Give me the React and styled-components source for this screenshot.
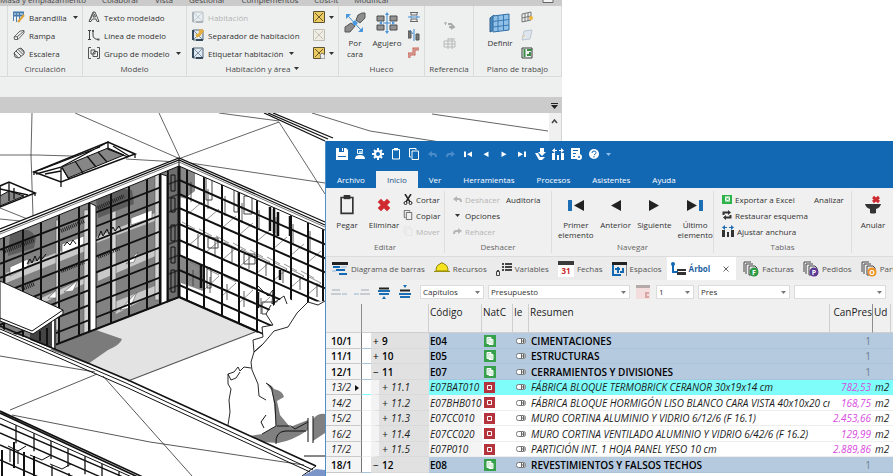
import React from 'react'
import styled, { createGlobalStyle } from 'styled-components'

const GlobalStyle = createGlobalStyle`
    *{
        box-sizing:border-box;
    }
    body{
        margin:0;
        background:#fff;
        font-family:"Open Sans", "Noto Sans", sans-serif;
        font-size:8px;
        color:#333;
    }
    button, select, input{
        font:inherit;
        color:inherit;
        margin:0;
    }
    svg{
        display:block;
        flex:none;
    }
`

/* ---------- icons ---------- */

const Svg = ({ w = 12, h = 12, box, children }) => (
  <svg width={w} height={h} viewBox={box || `0 0 ${w} ${h}`} fill="none" stroke="#444" strokeWidth="1" aria-hidden="true">
    {children}
  </svg>
)

const Caret = ({ color = '#333' }) => (
  <Svg w={5} h={3}><path d="M0 0h5L2.500 3z" fill={color} stroke="none" /></Svg>
)

const RailingIcon = () => (
  <Svg>
    <path d="M0 1.500h11M0 4.500h11" stroke="#3f79b0" strokeWidth="2" />
    <path d="M.5 1v9M3.500 1v10M6.500 1v10M10.500 1v4" stroke="#4c7fae" />
    <path d="M5 11l6-7" stroke="#e0a23c" strokeWidth="2" />
  </Svg>
)
const RampIcon = () => (
  <Svg><path d="M1 8l6-6 4-.5v2.500L5 10.500H1.500zM1 8l3.500-.5L11 2M4.500 7.500V10" stroke="#666" /></Svg>
)
const StairIcon = () => (
  <Svg><path d="M1 6l4-4 3-1 3 3v3l-5 4-4-1zM3 4l5 5M5 2.500l5 5M1 6l4 4.500M7 1.500l4 4" stroke="#555" /></Svg>
)
const ModelTextIcon = () => (
  <Svg><path d="M1 10.500L5 1h2l4 9.500H9L8 8H4.500l-1.500 2.500zM5 6h2.500L6.500 3zM2 9l4-8" stroke="#555" /></Svg>
)
const ModelLineIcon = () => (
  <Svg><path d="M1.500 1v10M0 1.500h3M0 10.500h3M5 2v4q0 4 5 4.500" /><path d="M4 1h2v2H4zM9.500 9.500h2v2h-2z" fill="#555" stroke="none" /></Svg>
)
const ModelGroupIcon = () => (
  <Svg><path d="M3 .5H.5v11H3M9 .5h2.500v11H9M3 3h4v4H3zM5 6.500l1-2h3.500v5H5z" stroke="#555" /></Svg>
)
const RoomIcon = ({ accent, faded }) => (
  <Svg>
    <g opacity={faded ? 0.35 : 1}>
      <path d="M1 1h10v10H1z" fill="#dfe8ef" stroke="#52677a" />
      <path d="M1 1l10 10M11 1L1 11" stroke="#7c92a6" />
      <path d="M1 1v10M4 11h7" strokeWidth="2" stroke="#34495c" />
    </g>
    {accent && <path d="M4 7l3-1 4-5M7 2h4" stroke={accent} strokeWidth="3" />}
  </Svg>
)
const AreaIcon = ({ faded, tag }) => (
  <Svg>
    <g opacity={faded ? 0.3 : 1}>
      <path d="M.5.500h11v11H.5z" fill={faded ? '#eee6cc' : '#eccb62'} stroke="#5b5130" />
      <path d="M2 2l8 8M10 2l-8 8" stroke="#6b5c26" />
    </g>
    {tag && <path d="M7 8l2-2 3 2v4H8z" fill="#eee" stroke="#777" />}
  </Svg>
)
const FaceOpeningIcon = () => (
  <Svg w={22} h={22}>
    <path d="M14 3l4-2h3v5l-5 5-4-3zM1 15l6-4 4 3-5 6H1z" fill="#8d8d8d" stroke="#555" />
    <path d="M4 4l13 14" stroke="#3d89cf" />
    <path d="M2 2h5L2 7zM19 20h-5l5-5zM8 11l3-3 3 3-3 3z" fill="#4a97de" stroke="none" />
  </Svg>
)
const ShaftIcon = () => (
  <Svg w={22} h={22}>
    <path d="M1 4h7v5H1zM14 4h7v5h-7zM1 13h7v5H1zM14 13h7v5h-7z" fill="#939393" stroke="#4d4d4d" />
    <path d="M11 1v20M7 11h8" stroke="#3d89cf" />
    <path d="M9 3l2-3 2 3zM9 19l2 3 2-3zM6 9v4l-3-2zM16 9v4l3-2z" fill="#4a97de" stroke="none" />
  </Svg>
)
const WallOpeningIcon = () => (
  <Svg><path d="M2 1.500h8M2 10.500h8M3 1v3h6V1M3 11V8h6v3" stroke="#666" /><path d="M0 6h12M3 4.500v3M9 4.500v3" stroke="#4a90cf" /></Svg>
)
const VerticalOpeningIcon = () => (
  <Svg><path d="M0 2h3v7H0zM8 5h3v6H8z" fill="#777" stroke="#555" /><path d="M6 0v12M2 1l3 4" stroke="#3d89cf" /></Svg>
)
const DormerIcon = () => (
  <Svg><path d="M1 11V7h5V2h5" stroke="#c9675b" strokeWidth="3" /><path d="M1 11V7h5V2h5" stroke="#dcb1ab" /></Svg>
)
const RefLineIcon = () => (
  <Svg w={14}><path d="M1 4h3M2.500 3v3" stroke="#b0b0b0" /><path d="M6 8h5M8 5l3 3-3 2M5 5h4" stroke="#aaa" strokeWidth="2" /></Svg>
)
const RefGridIcon = () => (
  <Svg w={14}><path d="M1 4h11v6H1zM5 1v11M9 1v11M1 7h11M12 2H5" stroke="#b8b8b8" /></Svg>
)
const WorkPlaneIcon = () => (
  <Svg w={22} h={22}>
    <path d="M1 6L5 3v15l-4 2z" fill="#4a87ba" stroke="#2f628e" />
    <path d="M4 4l16-2v16L4 20z" fill="#8fc1e8" stroke="#2f6ea8" />
    <path d="M9 3.500v16M14.500 3v15.500M4 9.500l16-2M4 15l16-2" stroke="#3a7ab3" />
  </Svg>
)
const ShowPlaneIcon = () => (
  <Svg><path d="M1 3l9-2v8l-9 2zM4 2.500v8M7 2v8M1 7l9-2" stroke="#777" /><circle cx="10" cy="7" r="2" fill="#f0b73c" stroke="none" /></Svg>
)
const RefPlaneIcon = () => (
  <Svg><path d="M3 2l8-1-2 9-8 1z" fill="#dfe5ec" stroke="#bcc6d2" /><path d="M1 9l3-3" stroke="#e6c98a" /></Svg>
)
const ViewerIcon = () => (
  <Svg><path d="M1 1h10v10H1z" stroke="#3b3b3b" /><path d="M3.500 2v8M6 3h5M6 8h3V5" stroke="#3c8b48" strokeWidth="2" /></Svg>
)

const SaveIcon = () => (
  <Svg><path d="M0 0h10l2 2v10H0z" fill="#fff" stroke="none" /><path d="M3 0h5v4H3zM2 8h8v1H2z" fill="#1368b4" stroke="none" /><path d="M6 0h1v3H6z" fill="#fff" stroke="none" /></Svg>
)
const UserDiskIcon = () => (
  <Svg><path d="M3.500 1.500h5v4h-5z" stroke="#fff" /><path d="M1 11q0-4 5-4t5 4z" fill="#fff" stroke="none" /><path d="M5 3h4v2H5z" fill="#9fd0f5" stroke="none" /></Svg>
)
const GearIcon = () => (
  <Svg><circle cx="6" cy="6" r="3" stroke="#fff" strokeWidth="2" /><path d="M6 0v2.500M6 9.500V12M0 6h2.500M9.500 6H12M2 2l2 2M8 8l2 2M2 10l2-2M8 4l2-2" stroke="#fff" strokeWidth="2" /></Svg>
)
const PasteIcon = ({ size = 12, color = '#fff' }) => (
  <Svg w={size} h={size} box="0 0 12 12"><path d="M2.500 1.500h7v9.500h-7z" stroke={color} /><path d="M4 0h4v2.500H4z" fill={color} stroke="none" /></Svg>
)
const CopyIcon = ({ color = '#fff', size = 12 }) => (
  <Svg w={size} h={size} box="0 0 12 12"><path d="M4 3h6.500v8.500H4zM3 9H1.500V.5H8V2" stroke={color} /></Svg>
)
const UndoIcon = ({ flip, color }) => (
  <Svg w={9} h={8}>
    <g transform={flip ? 'matrix(-1 0 0 1 9 0)' : undefined}>
      <path d="M0 4l4-3v6z" fill={color} stroke="none" /><path d="M3 4h3q2 0 2 3" stroke={color} strokeWidth="2" />
    </g>
  </Svg>
)
const StepIcon = ({ dir, bar, size = 8, color = '#fff', barColor = '#fff' }) => (
  <Svg w={bar ? size + 6 : size} h={size} box={bar ? '0 0 18 12' : '0 0 12 12'}>
    <g transform={dir === 'next' ? `matrix(-1 0 0 1 ${bar ? 18 : 12} 0)` : undefined} stroke="none">
      {bar && <path d="M1 1h4v11H1z" fill={barColor} />}
      <path d={bar ? 'M17 1v11L7 6.500z' : 'M11 1v11L1 6.500z'} fill={color} />
    </g>
  </Svg>
)
const LoadIcon = () => (
  <Svg><path d="M6 0h4v4h2l-4 4-4-4h2zM1 5h3l2 4h5l-3 3H5z" fill="#fff" stroke="none" /></Svg>
)
const WidthIcon = ({ bars = '#fff', arrows = '#fff' }) => (
  <Svg><path d="M0 5h3v7H0zM5 7h2v5H5zM9 5h3v7H9z" fill={bars} stroke="none" /><path d="M0 2.500L3 0v5zM12 2.500L9 0v5z" fill={arrows} stroke="none" /><path d="M3 2.500h2M7 2.500h2" stroke={arrows} /></Svg>
)
const DocGearIcon = () => (
  <Svg><path d="M1 0h9v6H8v5H1z" fill="#fff" stroke="none" /><path d="M3 2.500h5M3 5.500h3M3 8.500h2" stroke="#1368b4" /><circle cx="9" cy="9" r="2" stroke="#fff" strokeWidth="2" /></Svg>
)
const HelpIcon = () => (
  <Svg><circle cx="6" cy="6" r="5" fill="#fff" stroke="none" /><path d="M4 5q0-2 2-2t2 1.500T6 7M6 8v1.500" stroke="#1368b4" /></Svg>
)
const CrossIcon = ({ size = 12 }) => (
  <Svg w={size} h={size} box="0 0 12 12"><path d="M2 2l8 8M10 2l-8 8" stroke="#cf2a30" strokeWidth="4" /></Svg>
)
const CutIcon = () => (
  <Svg w={10} h={11}><path d="M2 0l5 8M8 0L3 8" stroke="#222" strokeWidth="1.500" /><circle cx="2.500" cy="9" r="1.500" stroke="#222" /><circle cx="7.500" cy="9" r="1.500" stroke="#222" /></Svg>
)
const ExcelIcon = () => (
  <Svg w={10} h={10}><path d="M0 1h10v9H0z" fill="#2eb34a" stroke="none" /><path d="M3 2.500h5v5H3z" fill="#fff" stroke="none" /><path d="M4 3.500l3 3M7 3.500l-3 3" stroke="#2eb34a" /></Svg>
)
const RefreshIcon = () => (
  <Svg w={10} h={10}><path d="M1.500 5V2.500H6M8.500 5v2.500H4" stroke="#333" strokeWidth="2" /><path d="M6 0l3 2.500L6 5zM4 5L1 7.500 4 10z" fill="#333" stroke="none" /></Svg>
)
const FilterOffIcon = () => (
  <Svg w={18} h={20}><path d="M9 2l6 5M15 2L9 7" stroke="#cf2a30" strokeWidth="3" /><path d="M1 9h16q-1 4-5 5v4q-3 1-6 0v-4Q2 13 1 9z" fill="#333" stroke="none" /></Svg>
)
const PanelIcon = () => (
  <Svg w={12} h={6}><path d="M1 0v3.500h10V0" stroke="#666" fill="#f4f4f4" /></Svg>
)

const GanttIcon = () => (
  <Svg w={16} h={14}><path d="M0 1.500h16" stroke="#222" strokeWidth="3" /><path d="M1 5h7M4 8h9M7 12h8" stroke="#1368b4" strokeWidth="2" /><path d="M0 9h4M9 5h6" stroke="#8fb5d8" strokeWidth="1" /></Svg>
)
const HelmetIcon = () => (
  <Svg w={16} h={14}><path d="M2 9q0-6 4-7l1-1h2l1 1q4 1 4 7z" fill="#f6e51e" stroke="#8d8010" /><path d="M0 9.500h16" stroke="#9b8e0d" /></Svg>
)
const VariablesIcon = () => (
  <Svg w={16} h={14}><path d="M6 2h2M6 5h2M6 8h2M9 2h7M9 5h7M9 8h7" stroke="#444" strokeWidth="2" /><path d="M.5 9.500h3v4h-3zM1 8.500h2" stroke="#444" /></Svg>
)
const CalendarIcon = () => (
  <Svg w={16} h={16}>
    <path d="M0 0h16v4H0z" fill="#3a3a3a" stroke="none" /><path d="M0 4h16v12H0z" fill="#fff" stroke="none" />
    <text x="8" y="13" textAnchor="middle" fontSize="8" fontWeight="700" fill="#c8262c" stroke="none">31</text>
  </Svg>
)
const SpacesIcon = () => (
  <Svg w={15} h={14}><path d="M0 1.500h15" stroke="#222" strokeWidth="3" /><path d="M14.500 3v11" stroke="#888" /><path d="M1 3v10h8" stroke="#1368b4" strokeWidth="2" /><path d="M3 7h5M6 5v6M8 10h3V6" stroke="#1368b4" strokeWidth="2" /></Svg>
)
const TreeIcon = () => (
  <Svg w={15} h={14}><path d="M2 2v8h5" stroke="#1368b4" strokeWidth="2" /><circle cx="2" cy="2" r="2" fill="#1368b4" stroke="none" /><path d="M6 7h9v2H6zM6 10h9v3H6z" fill="#333" stroke="none" /></Svg>
)
const DocsIcon = ({ letter, color }) => (
  <Svg w={16} h={16}>
    <path d="M1 11V1h7M3 13V3h7M6 5h6l2 2v7H6z" fill="none" stroke="#444" />
    <circle cx="11" cy="11" r="4.500" fill={color} stroke="none" />
    <text x="11" y="14" textAnchor="middle" fontSize="7" fontWeight="700" fill="#fff" stroke="none">{letter}</text>
  </Svg>
)

const LevelIcon = ({ flip }) => (
  <Svg w={16} h={12}>
    <g opacity="0.4" transform={flip ? 'matrix(-1 0 0 1 16 0)' : undefined}>
      <path d="M1 5h8M0 9h10" stroke="#8d9aa6" strokeWidth="2" /><path d="M11 9h5" stroke="#7fa8c9" strokeWidth="2" />
    </g>
  </Svg>
)
const ExpandIcon = ({ up }) => (
  <Svg w={14} h={14}>
    <path d={up ? 'M2 5.500h10' : 'M2 3.500h10'} stroke="#222" strokeWidth="2" />
    <path d={up ? 'M1 9h12M2 12h10' : 'M1 6h12M2 9h10'} stroke="#1d6fb5" strokeWidth="2" />
    <path d={up ? 'M5 0h4L7 3z' : 'M5 14h4L7 11z'} fill="#1d6fb5" stroke="none" />
  </Svg>
)
const PinkIcon = () => (
  <Svg w={14} h={14}><path d="M0 0h14v14H0z" fill="#f3dedd" stroke="none" /><path d="M0 1.500h14" stroke="#b5aaaa" strokeWidth="3" /><path d="M13 8h-3v4h3" stroke="#d9a5a5" strokeWidth="2" /></Svg>
)
const NatIcon = ({ chapter }) => chapter ? (
  <Svg><path d="M0 0h12v12H0z" fill="#36a04b" stroke="none" /><path d="M3 2.500h4v6H3zM5 4.500h4v5H5z" fill="#b9e2c0" stroke="#fff" /></Svg>
) : (
  <Svg w={11} h={11}><path d="M0 0h11v11H0z" fill="#b4333c" stroke="none" /><path d="M3.500 3.500h4v4h-4z" stroke="#fff" /></Svg>
)
const TagIcon = () => (
  <Svg w={11} h={8}><rect x="1.500" y="1.500" width="9" height="5" rx="2" fill="#fff" stroke="#777" /><path d="M6.500 2v4M6 4h4M8.500 2v4" stroke="#666" /></Svg>
)

/* ---------- building model ---------- */

const leftColumns = [4, 23, 41, 59, 79, 89, 111, 129, 147, 160, 168]
const rightColumns = [187, 204, 222, 239, 257, 274, 291, 308, 323]
const floors = [180, 194, 208, 224, 240, 255, 270, 285, 297]
const bays = [0, 1, 2, 3, 4, 5, 6, 7]
const leftSlope = 0.4
const rightSlope = 0.44
const leftTop = x => 166 + (179 - x) * leftSlope
const leftBottom = x => 297 + (179 - x) * 0.387
const rightTop = x => 166 + (x - 179) * rightSlope
const rightBottom = x => 297 + (x - 179) * rightSlope

const BuildingView = () => (
  <svg viewBox="0 113 562 363" width="100%" height="100%" preserveAspectRatio="xMinYMin slice" fill="none" stroke="#111" role="img" aria-label="Modelo 3D del edificio">
    <defs>
      <clipPath id="leftWall"><path d="M0 239L179 166V298L55 346 0 330z" /></clipPath>
      <clipPath id="rightWall"><path d="M179 166L325 230V362L179 298z" /></clipPath>
      <clipPath id="lowWall"><path d="M0 413L145 478H0z" /></clipPath>
    </defs>

    <g stroke="#222" strokeWidth="0.7">
      <path d="M32 113L31 155 33 216M75 113L178 158M159 113L180 158M181 158L279 122M219 113L279 121M279 122L325 194M190 163L325 183M126 159L178 162M0 155H37L106 157" />
      <path d="M312 113L370 131 440 142M432 114L548 131M0 208L30 220M0 219L20 221" />
    </g>
    <path d="M264 113L325 141M268 113L328 139M273 113L333 138" strokeWidth="1.300" />

    {/* skylights */}
    <path d="M34 172L108 142 135 154 61 182z" fill="#fff" strokeWidth="1.600" />
    <path d="M62 167L108 148 124 155 68 178z" fill="#868686" />
    <path d="M36 174L61 167V187M61 167L108 142V149L128 157M75 161l8 12M87 156l9 11M98 152l9 10M62 168l7 11M40 170L100 147M135 154V158M34 171V175M45 174l16-3M113 146l16 10" strokeWidth="1.300" />
    <path d="M0 186L9 182 35 193 0 207z" fill="#fff" strokeWidth="1.600" />
    <path d="M0 196L9 191 24 196 0 206z" fill="#868686" />
    <path d="M0 189L28 195M9 182V201M35 193V196M14 188V199" strokeWidth="1.300" />

    {/* left wall */}
    <g clipPath="url(#leftWall)">
      <path d="M0 160H180V350H0z" fill="#828282" stroke="none" />
      <path d="M6 273L88 240V250L6 283zM96 237L160 211V219L96 243zM30 303L88 277V282L30 309zM98 273L160 247V254L98 281zM112 303L160 284V291L116 314z" fill="#c9c9c9" stroke="none" />
      <path d="M10 267L28 259V267L10 276zM62 244L84 236V244L62 253zM131 218L152 210V218L131 225zM48 298L62 285 56 298zM126 264l12-12-4 10zM64 292l14-12-5 11zM120 310L137 292 130 308z" fill="#fff" stroke="#555" strokeWidth="0.600" />
      <path d="M84 210h5v130h-5zM112 192h4v120h-4zM155 170h4v130h-4zM56 220h3v110h-3z" fill="#d5d5d5" stroke="#444" strokeWidth="0.500" />
      <path d="M10 234q20-10 26 4l-2 10-26 8zM96 200q8-14 36-10l2 14-36 14z" fill="#5c5c5c" stroke="none" />
      <path d="M3 252L34 240M61 231L84 221M98 208L124 196M61 271L84 262M98 257L120 248M22 289L34 284" stroke="#222" strokeWidth="4" strokeDasharray="1 1" />
      <path d="M27 264l3-5 2 4 3-7 2 5 4-6 1 4 4-5M64 246l3-4 3 3 3-5 3 4M98 238l3-7 2 5 4-7 2 5 4-7 2 4 4-5 2 4" strokeWidth="1" />
      {floors.map(y => <path key={y} d={`M179 ${y}L0 ${y + 179 * 0.39}`} strokeWidth="1.800" />)}
      {[302, 319].map(y => <path key={y} d={`M179 ${y}L0 ${y + 70}`} strokeWidth="1.800" />)}
      {leftColumns.map(x => <path key={x} d={`M${x} ${leftTop(x)}V${leftBottom(x) + 4}`} strokeWidth="2" />)}
      <path d="M168 165h11v135h-11z" fill="#5a5a5a" fillOpacity="0.5" />
      <path d="M171 175h4v16h-4zM171 198h4v14h-4zM171 225h4v16h-4zM171 247h4v16h-4zM171 270h4v22h-4z" />
    </g>
    <path d="M90 203l6 3V333l-6-2zM161 174l6 2V305l-6 1z" fill="#fff" />

    {/* right wall */}
    <g clipPath="url(#rightWall)">
      <path d="M179 160H325V360H179z" fill="#fff" stroke="none" />
      <path d="M179 166l8 3v30l-8-2zM187 170l8 3v18l-8 6zM181 256l22 10v25l-22-8z" fill="#888" stroke="none" />
      <g stroke="#777" strokeWidth="0.800">
        {bays.map(i => (
          <path key={i} d={`M${188 + i * 17} ${214 + i * 7}l14-12M${188 + i * 17} ${246 + i * 7}l14-12M${188 + i * 17} ${282 + i * 7}l14-13M${182 + i * 17} ${222 + i * 7}l13 7M${190 + i * 17} ${228 + i * 7}l12 6M${190 + i * 17} ${262 + i * 7}l12 6`} />
        ))}
      </g>
      <g stroke="#333" strokeWidth="0.800">
        {bays.map(i => (
          <path key={i} d={`M${191 + i * 17} ${182 + i * 7}v20M${198 + i * 17} ${234 + i * 7}v14M${193 + i * 17} ${270 + i * 7}v16`} />
        ))}
      </g>
      <path d="M206 178h6v22h-6zM234 190h4v22h-4zM244 196h8v18h-8zM208 238h10v10h-10zM244 254h11v10h-11zM207 268h4v20h-4zM262 302h16v12h-16z" stroke="#444" />
      <path d="M270 207v24M274 209v24M278 212v24M290 216v20M280 270v10M258 292v16M201 264v24" strokeWidth="2.500" />
      {floors.map(y => <path key={y} d={`M179 ${y}L325 ${y + 146 * rightSlope}`} strokeWidth="2" />)}
      {rightColumns.map(x => <path key={x} d={`M${x} ${rightTop(x)}V${rightBottom(x)}`} strokeWidth="2" />)}
    </g>
    <path d="M179 166V298" strokeWidth="3" />

    {/* parapet */}
    <path d="M0 229L179 158 325 222V230L179 166 0 239z" fill="#fff" stroke="none" />
    <path d="M0 229L179 158 325 222M0 232L179 160 325 225" strokeWidth="1.300" />
    <path d="M0 234L179 162 325 227" stroke="#777" />
    <path d="M0 239L179 166 325 230M179 158V168" />

    {/* courtyard */}
    <path d="M179 298L255 332 128 381 50 347z" fill="#e3e3e3" stroke="none" />
    <path d="M55 346L96 330 122 339Q120 345 108 350L88 364 50 350z" fill="#7b7b7b" stroke="none" />
    <path d="M55 345L179 297 258 332" strokeWidth="2" />
    <path d="M255 332L128 381" stroke="#555" strokeWidth="1.300" />

    {/* canopy */}
    <path d="M30 320h26v30l-26-10z" fill="#444" stroke="none" />
    <path d="M40 331V341M47 328V345" strokeWidth="2" />
    <path d="M53 316V348" stroke="#fff" strokeWidth="2" />
    <path d="M0 281L63 310V314L33 334 0 321z" fill="#fff" />
    <path d="M63 310L32 331 0 318" />

    {/* trees */}
    <path d="M272 307L266 314 273 325 262 328 263 336 254 340 254 350 262 345 252 360 250 368 240 367 228 375 231 390 228 425 325 470V301L297 303 284 296z" fill="#fff" stroke="none" />
    <path d="M258 286L268 296 273 290 272 304 284 296 287 304M271 305L266 314 273 325 262 327 263 337 253 340 254 352 262 345" strokeWidth="0.900" />
    <path d="M325 301L318 305 308 302 297 313 288 327 274 331 263 344 254 352 251 362 252 370 258 384 259 396 266 400" strokeWidth="0.900" />
    <path d="M251 368L244 367 240 371 238 367 234 372 228 374 231 380 236 378 240 372M228 374L228 384 231 389 229 400 230 412 228 425" strokeWidth="0.900" />
    <path d="M266 383Q272 385 274 389Q283 391 284 397L277 401 280 415 290 427 308 420V430Q292 441 278 443L262 442 250 436 262 434 276 426 274 404 272 391z" fill="#808080" stroke="none" />
    <path d="M266 383Q273 387 272 391L275 404 276 426 262 434M277 426h14l4 3 13-7" strokeWidth="0.900" />
    <path d="M313 419Q318 413 325 414V433L313 441z" fill="#808080" stroke="none" />
    <path d="M308 418V442M313 416V443M304 456H325M266 415l-5 7 3 6M276 444Q275 432 285 431H306" />

    {/* lower roof */}
    <path d="M0 328L316 465 312 476H145L0 411z" fill="#fff" stroke="none" />
    <path d="M0 326L128 380 316 466" strokeWidth="1.600" />
    <path d="M0 329L126 383 313 470M0 332L128 388 310 472" />
    <path d="M316 466L302 476" />
    <path d="M316 469L302 476H325V470z" fill="#7c95c9" stroke="none" />
    <path d="M0 356L95 372M10 410L97 374M103 376L192 476M12 415L150 442 304 465" strokeWidth="0.700" />

    {/* lower facade */}
    <g clipPath="url(#lowWall)">
      {[16, 34, 51, 68, 85, 102, 119].map(x => <path key={x} d={`M${x} ${x * 0.45 + 418}v18M${x + 18} ${x * 0.45 + 450}v34`} strokeWidth="1.300" />)}
      <path d="M0 424L130 480M0 433L112 482M0 445L90 484M0 460L50 482" strokeWidth="1.400" />
      <path d="M2 450v26M14 442v26M24 452v28M34 456v28" strokeWidth="2" />
      <path d="M10 450v12M18 450v14M8 446l10 5 8-5M30 455l12 5 9-5M50 464l12 5 9-5" />
    </g>
    <path d="M0 411L145 478M0 413L140 478" strokeWidth="1.600" />
    <path d="M0 418L134 478" />
  </svg>
)

/* ---------- background application ---------- */

const RibbonGroup = ({ title, width, caret, start, children }) => (
  <Group $width={width}>
    <GroupBody $start={start}>{children}</GroupBody>
    <GroupTitle>{title}{caret && <Caret />}</GroupTitle>
  </Group>
)

const Tool = ({ icon, label, caret, disabled }) => (
  <ToolButton type="button" disabled={disabled} aria-label={label ? undefined : 'Herramienta'}>
    {icon}
    {label && <span>{label}</span>}
    {caret && <Caret />}
  </ToolButton>
)

const ModelWindow = () => (
  <ModelFrame>
    <ClippedTabs>
      <span>Masa y emplazamiento</span><span>Colaborar</span><span>Vista</span><span>Gestionar</span><span>Complementos</span><span>Cost-it</span><span>Modificar</span>
      <PanelIcon />
    </ClippedTabs>
    <ModelRibbon>
      <Edge />
      <RibbonGroup title="Circulación" width={75}>
        <ToolColumn>
          <Tool icon={<RailingIcon />} label="Barandilla" caret />
          <Tool icon={<RampIcon />} label="Rampa" />
          <Tool icon={<StairIcon />} label="Escalera" />
        </ToolColumn>
      </RibbonGroup>
      <RibbonGroup title="Modelo" width={104}>
        <ToolColumn>
          <Tool icon={<ModelTextIcon />} label="Texto modelado" />
          <Tool icon={<ModelLineIcon />} label="Línea de modelo" />
          <Tool icon={<ModelGroupIcon />} label="Grupo de modelo" caret />
        </ToolColumn>
      </RibbonGroup>
      <RibbonGroup title="Habitación y área" width={152} caret>
        <ToolColumn>
          <Tool icon={<RoomIcon faded />} label="Habitación" disabled />
          <Tool icon={<RoomIcon accent="#e3ae3f" />} label="Separador de habitación" />
          <Tool icon={<RoomIcon />} label="Etiquetar habitación" caret />
        </ToolColumn>
        <ToolColumn>
          <Tool icon={<AreaIcon />} caret />
          <Tool icon={<AreaIcon faded />} disabled />
          <Tool icon={<AreaIcon tag />} caret />
        </ToolColumn>
      </RibbonGroup>
      <RibbonGroup title="Hueco" width={86}>
        <BigTool type="button"><FaceOpeningIcon /><span>Por<br />cara</span></BigTool>
        <BigTool type="button"><ShaftIcon /><span>Agujero</span></BigTool>
        <ToolColumn>
          <Tool icon={<WallOpeningIcon />} />
          <Tool icon={<VerticalOpeningIcon />} />
          <Tool icon={<DormerIcon />} />
        </ToolColumn>
      </RibbonGroup>
      <RibbonGroup title="Referencia" width={49}>
        <ToolColumn $centered>
          <Tool icon={<RefLineIcon />} disabled />
          <Tool icon={<RefGridIcon />} disabled />
        </ToolColumn>
      </RibbonGroup>
      <RibbonGroup title="Plano de trabajo" width={88} start>
        <BigTool type="button" $wide><WorkPlaneIcon /><span>Definir</span></BigTool>
        <ToolColumn>
          <Tool icon={<ShowPlaneIcon />} />
          <Tool icon={<RefPlaneIcon />} />
          <Tool icon={<ViewerIcon />} />
        </ToolColumn>
      </RibbonGroup>
    </ModelRibbon>
    <OptionsBar />
    <ViewBar>
      <IconButton type="button" aria-label="Vistas">
        <Svg w={7} h={6}><path d="M0 .5h7" stroke="#222" /><path d="M0 2h7L3.500 6z" fill="#222" stroke="none" /></Svg>
      </IconButton>
    </ViewBar>
    <Canvas>
      <Drawing><BuildingView /></Drawing>
      <ScrollTrack><Svg w={7} h={5}><path d="M1 4l2.500-3L6 4" strokeWidth="1.500" /></Svg></ScrollTrack>
    </Canvas>
  </ModelFrame>
)

/* ---------- budget application ---------- */

const menus = ['Archivo', 'Inicio', 'Ver', 'Herramientas', 'Procesos', 'Asistentes', 'Ayuda']

const quickActions = [
  ['Guardar', <SaveIcon />], ['Usuario', <UserDiskIcon />], ['Opciones', <GearIcon />], ['Pegar', <PasteIcon />],
  ['Copiar', <CopyIcon />], ['Deshacer', <UndoIcon color="#4a8cc9" />], ['Rehacer', <UndoIcon flip color="#4a8cc9" />],
  ['Primero', <StepIcon bar size={6} />], ['Anterior', <StepIcon size={6} />], ['Siguiente', <StepIcon dir="next" size={6} />],
  ['Último', <StepIcon bar dir="next" size={6} />], ['Cargar', <LoadIcon />], ['Ajustar', <WidthIcon />],
  ['Informe', <DocGearIcon />], ['Ayuda', <HelpIcon />],
]

const views = [
  ['Diagrama de barras', <GanttIcon />], ['Recursos', <HelmetIcon />], ['Variables', <VariablesIcon />],
  ['Fechas', <CalendarIcon />], ['Espacios', <SpacesIcon />], ['Árbol', <TreeIcon />],
  ['Facturas', <DocsIcon letter="F" color="#2e9b47" />], ['Pedidos', <DocsIcon letter="P" color="#5b3a94" />],
  ['Partes', <DocsIcon letter="O" color="#ef9226" />],
]

const rows = [
  { n: '10/1', tree: '9', code: 'E04', text: 'CIMENTACIONES', qty: '1', sign: '+', chapter: true },
  { n: '11/1', tree: '10', code: 'E05', text: 'ESTRUCTURAS', qty: '1', sign: '+', chapter: true },
  { n: '12/1', tree: '11', code: 'E07', text: 'CERRAMIENTOS Y DIVISIONES', qty: '1', sign: '−', chapter: true },
  { n: '13/2', tree: '11.1', code: 'E07BAT010', text: 'FÁBRICA BLOQUE TERMOBRICK CERANOR 30x19x14 cm', qty: '782,53', unit: 'm2', sign: '+', selected: true },
  { n: '14/2', tree: '11.2', code: 'E07BHB010', text: 'FÁBRICA BLOQUE HORMIGÓN LISO BLANCO CARA VISTA 40x10x20 cm', qty: '168,75', unit: 'm2', sign: '+' },
  { n: '15/2', tree: '11.3', code: 'E07CC010', text: 'MURO CORTINA ALUMINIO Y VIDRIO 6/12/6 (F 16.1)', qty: '2.453,66', unit: 'm2', sign: '+' },
  { n: '16/2', tree: '11.4', code: 'E07CC020', text: 'MURO CORTINA VENTILADO ALUMINIO Y VIDRIO 6/42/6 (F 16.2)', qty: '129,99', unit: 'm2', sign: '+' },
  { n: '17/2', tree: '11.5', code: 'E07P010', text: 'PARTICIÓN INT. 1 HOJA PANEL YESO 10 cm', qty: '2.889,86', unit: 'm2', sign: '+' },
  { n: '18/1', tree: '12', code: 'E08', text: 'REVESTIMIENTOS Y FALSOS TECHOS', qty: '1', sign: '−', chapter: true },
]

const Dropdown = ({ label, value, width }) => (
  <DropdownBox $width={width}>
    <DropdownSelect aria-label={label} defaultValue={value}><option>{value}</option></DropdownSelect>
    <DropdownArrow><Caret color="#777" /></DropdownArrow>
  </DropdownBox>
)

const BudgetRow = ({ row }) => (
  <Row $chapter={row.chapter} $selected={row.selected}>
    <NumberCell><span>{row.n}</span>{row.selected && <Svg w={4} h={6}><path d="M0 0l4 3-4 3z" fill="#111" stroke="none" /></Svg>}</NumberCell>
    <GapCell />
    <TreeCell $chapter={row.chapter}><Sign>{row.sign}</Sign>{row.tree}</TreeCell>
    <CodeCell $plain={!row.chapter && !row.selected}>{row.code}</CodeCell>
    <td><NatIcon chapter={row.chapter} /></td>
    <td><TagIcon /></td>
    <td>{row.text}</td>
    <QtyCell $chapter={row.chapter}>{row.qty}</QtyCell>
    <td>{row.unit}</td>
    <td />
  </Row>
)

const BudgetWindow = () => (
  <BudgetFrame>
    <QuickBar>
      {quickActions.map(([label, icon]) => <QuickButton key={label} type="button" aria-label={label}>{icon}</QuickButton>)}
      <IconButton type="button" aria-label="Personalizar"><Caret color="#8fc0ea" /></IconButton>
    </QuickBar>
    <MenuBar>
      {menus.map(name => <MenuTab key={name} type="button" $active={name === 'Inicio'}>{name}</MenuTab>)}
    </MenuBar>
    <BudgetRibbon>
      <Section $width={119}>
        <SectionBody>
          <Command type="button" $width={36}><PasteIcon size={20} color="#333" /><span>Pegar</span></Command>
          <Command type="button" $width={32}><CrossIcon size={14} /><span>Eliminar</span></Command>
          <CommandList>
            <SmallCommand type="button"><CutIcon />Cortar</SmallCommand>
            <SmallCommand type="button"><CopyIcon size={10} color="#555" />Copiar</SmallCommand>
            <SmallCommand type="button" disabled><CopyIcon size={10} color="#e2e2e2" />Mover</SmallCommand>
          </CommandList>
        </SectionBody>
        <SectionTitle>Editar</SectionTitle>
      </Section>
      <Section $width={107}>
        <SectionBody $inset>
          <CommandList>
            <SmallCommand type="button" disabled><UndoIcon color="#b5b5b5" />Deshacer</SmallCommand>
            <SmallCommand type="button"><MiniCaret><Caret /></MiniCaret>Opciones</SmallCommand>
            <SmallCommand type="button" disabled><UndoIcon flip color="#b5b5b5" />Rehacer</SmallCommand>
          </CommandList>
          <CommandList><SmallCommand type="button">Auditoría</SmallCommand></CommandList>
        </SectionBody>
        <SectionTitle>Deshacer</SectionTitle>
      </Section>
      <Section $width={162}>
        <SectionBody>
          <Command type="button" $width={42}><StepIcon bar size={12} color="#222" barColor="#1d6fb5" /><span>Primer<br />elemento</span></Command>
          <Command type="button" $width={32}><StepIcon size={12} color="#222" /><span>Anterior</span></Command>
          <Command type="button" $width={40}><StepIcon size={12} dir="next" color="#222" /><span>Siguiente</span></Command>
          <Command type="button" $width={36}><StepIcon bar size={12} dir="next" color="#222" barColor="#1d6fb5" /><span>Último<br />elemento</span></Command>
        </SectionBody>
        <SectionTitle>Navegar</SectionTitle>
      </Section>
      <Section $width={138}>
        <SectionBody $inset>
          <CommandList>
            <SmallCommand type="button"><ExcelIcon />Exportar a Excel</SmallCommand>
            <SmallCommand type="button"><RefreshIcon />Restaurar esquema</SmallCommand>
            <SmallCommand type="button"><WidthIcon bars="#333" arrows="#1d6fb5" />Ajustar anchura</SmallCommand>
          </CommandList>
          <CommandList><SmallCommand type="button">Analizar</SmallCommand></CommandList>
        </SectionBody>
        <SectionTitle>Tablas</SectionTitle>
      </Section>
      <Section $last>
        <SectionBody>
          <Command type="button" $width={36}><FilterOffIcon /><span>Anular</span></Command>
        </SectionBody>
      </Section>
    </BudgetRibbon>
    <ViewTabs>
      {views.map(([name, icon]) => (
        <ViewTab key={name} type="button" $active={name === 'Árbol'}>
          {icon}<span>{name}</span>
          {name === 'Árbol' && <Svg w={6} h={6}><path d="M.5.500l5 5M5.500.5l-5 5" stroke="#666" /></Svg>}
        </ViewTab>
      ))}
    </ViewTabs>
    <FilterBar>
      <LevelTools><LevelIcon /><LevelIcon flip /><ExpandIcon /><ExpandIcon up /></LevelTools>
      <Dropdown label="Nivel" value="Capítulos" width={64} />
      <Dropdown label="Vista" value="Presupuesto" />
      <PhaseMark><PinkIcon /></PhaseMark>
      <Dropdown label="Fase" value="1" width={38} />
      <Dropdown label="Precio" value="Pres" width={92} />
      <Dropdown label="Filtro" value="" width={92} />
    </FilterBar>
    <Table>
      <colgroup>
        <Col $width={36} /><Col $width={9} /><Col $width={58} /><Col $width={53} /><Col $width={31} />
        <Col $width={16} /><Col /><Col $width={43} /><Col $width={18} /><Col $width={2} />
      </colgroup>
      <thead>
        <tr><Th $dark /><Th $bare /><Th /><Th>Código</Th><Th>NatC</Th><Th>Ie</Th><Th>Resumen</Th><Th $dark $right>CanPres</Th><Th>Ud</Th><Th $bare /></tr>
      </thead>
      <tbody>
        {rows.map(row => <BudgetRow key={row.n} row={row} />)}
      </tbody>
    </Table>
  </BudgetFrame>
)

const App = () => {
  return (
    <Desktop>
      <GlobalStyle />
      <ModelWindow />
      <BudgetWindow />
    </Desktop>
  )
}

export default App

const Desktop=styled.main`
    position:relative;
    height:100vh;
    overflow:hidden;
    background:#fff;
`

const PlainButton=styled.button`
    border:0;
    padding:0;
    background:none;
    white-space:nowrap;
    cursor:pointer;
    &:disabled{
        color:#b4b4b4;
        cursor:default;
    }
`
const IconButton=styled(PlainButton)`
    display:flex;
    align-items:center;
`

const ModelFrame=styled.section`
    position:absolute;
    top:0;
    bottom:0;
    left:0;
    right:334px;
    display:flex;
    flex-direction:column;
    overflow:hidden;
    background:#eef0ef;
`
const ClippedTabs=styled.div`
    display:flex;
    align-items:flex-end;
    gap:16px;
    height:6px;
    line-height:11px;
    padding:0 8px 1px 0;
    background:#cbcbcb;
    color:#444;
    white-space:nowrap;
    overflow:hidden;
    svg{
        margin-left:auto;
    }
`
const ModelRibbon=styled.div`
    display:flex;
    flex:none;
    height:71px;
    border-bottom:1px solid #d9dbda;
`
const Edge=styled.div`
    width:8px;
    border-right:1px solid #d9dbda;
`
const Group=styled.div`
    width:${p => p.$width}px;
    flex:none;
    display:flex;
    flex-direction:column;
    border-right:1px solid #d9dbda;
`
const GroupBody=styled.div`
    flex:1;
    display:flex;
    justify-content:${p => p.$start ? 'flex-start' : 'space-between'};
    padding:2px 4px 0 5px;
`
const GroupTitle=styled.div`
    display:flex;
    align-items:center;
    justify-content:center;
    gap:4px;
    height:15px;
    padding-bottom:1px;
    color:#4a4a4a;
    white-space:nowrap;
`
const ToolColumn=styled.div`
    display:flex;
    flex-direction:column;
    ${p => p.$centered && 'margin:8px auto 0;'}
`
const ToolButton=styled(PlainButton)`
    display:flex;
    align-items:center;
    gap:4px;
    height:18px;
    span + svg{
        margin-left:2px;
    }
`
const BigTool=styled(PlainButton)`
    display:flex;
    flex-direction:column;
    align-items:center;
    gap:3px;
    min-width:${p => p.$wide ? 42 : 22}px;
    padding-top:4px;
    line-height:11px;
`
const OptionsBar=styled.div`
    height:20px;
    flex:none;
`
const ViewBar=styled.div`
    display:flex;
    justify-content:flex-end;
    align-items:center;
    flex:none;
    height:16px;
    padding:2px 4px 0;
    background:#cbcbcb;
`
const Canvas=styled.div`
    flex:1;
    min-height:0;
    display:flex;
    background:#fff;
    border-right:1px solid #d5d5d5;
`
const Drawing=styled.div`
    flex:1;
    min-width:0;
`
const ScrollTrack=styled.div`
    width:12px;
    padding:6px 0 0 2px;
    background:#f0f0f0;
`

const BudgetFrame=styled.section`
    position:absolute;
    top:141px;
    bottom:0;
    left:325px;
    right:3px;
    display:flex;
    flex-direction:column;
    overflow:hidden;
    background:#fff;
    border-left:1px solid #4f8fc8;
`
const QuickBar=styled.div`
    display:flex;
    align-items:center;
    gap:6px;
    height:30px;
    flex:none;
    padding:0 10px 4px;
    background:#1368b4;
`
const QuickButton=styled(IconButton)`
    justify-content:center;
    width:12px;
`
const MenuBar=styled.nav`
    display:flex;
    height:17px;
    flex:none;
    background:#1368b4;
`
const MenuTab=styled(PlainButton)`
    padding:0 11px;
    color:${p => p.$active ? '#1c5288' : '#fff'};
    background:${p => p.$active ? '#f1f1f1' : 'none'};
`
const BudgetRibbon=styled.div`
    display:flex;
    flex:none;
    height:69px;
    padding:3px 0;
    background:#f0f0f0;
    border-bottom:1px solid #dcdcdc;
`
const Section=styled.div`
    width:${p => p.$last ? 'auto' : `${p.$width}px`};
    flex:none;
    display:flex;
    flex-direction:column;
    border-right:${p => p.$last ? 0 : 1}px solid #dedede;
`
const SectionBody=styled.div`
    flex:1;
    display:flex;
    gap:${p => p.$inset ? 6 : 3}px;
    padding-left:${p => p.$inset ? 8 : 3}px;
`
const SectionTitle=styled.div`
    height:13px;
    line-height:13px;
    text-align:center;
    color:#666;
`
const Command=styled(PlainButton)`
    display:flex;
    flex-direction:column;
    align-items:center;
    width:${p => p.$width}px;
    line-height:10px;
    svg{
        height:28px;
        margin-bottom:1px;
    }
`
const CommandList=styled.div`
    display:flex;
    flex-direction:column;
`
const SmallCommand=styled(PlainButton)`
    display:flex;
    align-items:center;
    gap:3px;
    height:16px;
`
const MiniCaret=styled.span`
    width:9px;
    padding-left:2px;
`
const ViewTabs=styled.div`
    display:flex;
    flex:none;
    height:23px;
    padding-left:2px;
    background:#ebebeb;
    overflow:hidden;
`
const ViewTab=styled(PlainButton)`
    display:flex;
    align-items:center;
    gap:3px;
    flex:none;
    padding:0 5px 0 4px;
    margin-right:${p => p.$active ? 3 : 0}px;
    color:${p => p.$active ? '#1c5f9f' : '#555'};
    font-weight:${p => p.$active ? 700 : 400};
    background:${p => p.$active ? '#fff' : 'none'};
    span + svg{
        margin:0 2px 0 10px;
    }
`
const FilterBar=styled.div`
    display:flex;
    align-items:center;
    gap:4px;
    flex:none;
    height:24px;
    padding:0 7px 0 5px;
    background:#f0f0f0;
`
const LevelTools=styled.div`
    display:flex;
    gap:7px;
    padding-right:4px;
`
const PhaseMark=styled.span`
    padding:0 2px;
`
const DropdownBox=styled.div`
    display:grid;
    align-items:center;
    height:14px;
    ${p => p.$width ? `width:${p.$width}px;` : 'flex:1;'}
    background:#fff;
    border:1px solid #dcdcdc;
`
const DropdownSelect=styled.select`
    grid-area:1 / 1;
    width:100%;
    min-width:0;
    padding:0 12px 0 2px;
    border:0;
    background:none;
    appearance:none;
    line-height:12px;
`
const DropdownArrow=styled.span`
    grid-area:1 / 1;
    justify-self:end;
    padding-right:3px;
    pointer-events:none;
`
const Table=styled.table`
    width:100%;
    table-layout:fixed;
    border-collapse:separate;
    border-spacing:0;
    font-size:10px;
    color:#1c1c1c;
    line-height:14px;
    td{
        padding:0 2px;
        white-space:nowrap;
        overflow:hidden;
        border-bottom:1px solid #eee;
    }
`
const Col=styled.col`
    ${p => p.$width && `width:${p.$width}px;`}
`
const Th=styled.th`
    height:29px;
    padding:1px 0 0 1px;
    vertical-align:top;
    text-align:${p => p.$right ? 'right' : 'left'};
    font-weight:400;
    background:#f0f0f0;
    border-right:${p => p.$bare ? 0 : 1}px solid ${p => p.$dark ? '#8e8e8e' : '#cfcfcf'};
    border-bottom:1px solid #cfcfcf;
    white-space:nowrap;
`
const Row=styled.tr`
    height:16px;
    font-weight:${p => p.$chapter ? 600 : 400};
    font-style:${p => p.$chapter ? 'normal' : 'italic'};
    color:${p => p.$chapter ? '#000' : '#1c1c1c'};
    background:${p => p.$selected ? '#7ffdfb' : p.$chapter ? '#b5cade' : '#fff'};
    &:nth-child(even){
        height:15px;
    }
    &:nth-child(even) td{
        line-height:13px;
    }
    td{
        border-bottom-color:${p => p.$selected ? '#7ffdfb' : p.$chapter ? '#a9c3dc' : '#eee'};
    }
`
const NumberCell=styled.td`
    background:#f4f4f4;
    border-right:1px solid #777;
    && {
        padding-left:5px;
        border-bottom-color:#c9c9c9;
    }
    svg{
        display:inline-block;
        margin-left:4px;
    }
`
const GapCell=styled.td`
    background:#fff;
`
const TreeCell=styled.td`
    background:#e1e1e1;
    && {
        padding-left:${p => p.$chapter ? 2 : 3}px;
        border-left:${p => p.$chapter ? 0 : 8}px solid #f3f3f3;
        border-bottom-color:#dadada;
    }
`
const Sign=styled.span`
    display:inline-block;
    width:9px;
    font-weight:400;
`
const CodeCell=styled.td`
    ${p => p.$plain && 'background:#f4f4f4;'}
    && {
        padding:0 0 0 1px;
    }
`
const QtyCell=styled.td`
    text-align:right;
    font-weight:400;
    color:${p => p.$chapter ? '#6f7f8e' : '#d84be0'};
`
